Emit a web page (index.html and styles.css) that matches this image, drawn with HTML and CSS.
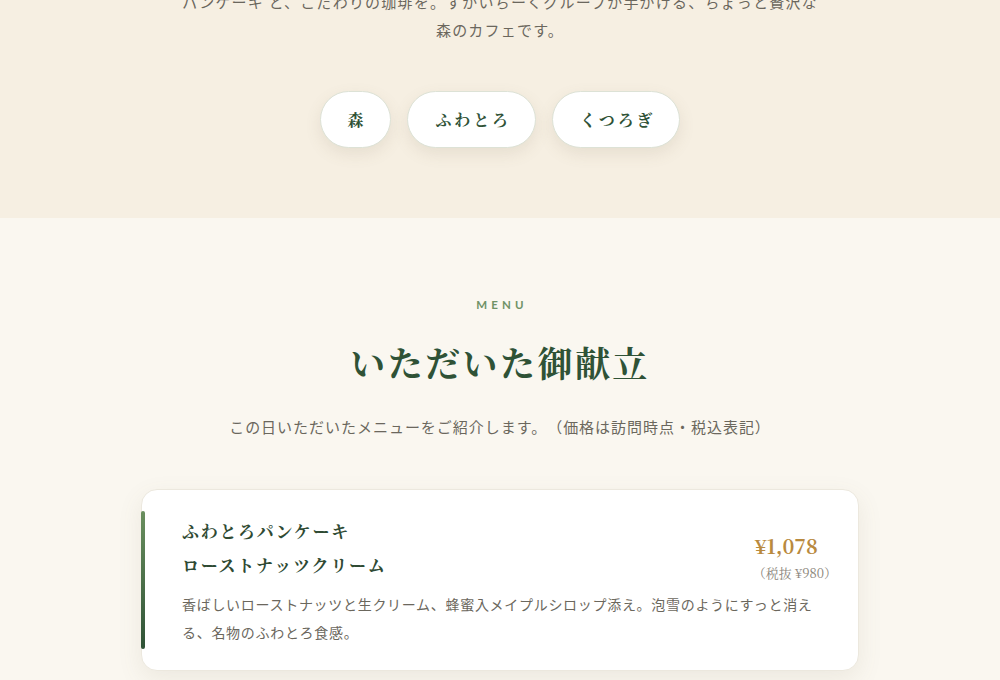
FILE: index.html
```html
<!DOCTYPE html>
<html lang="ja">
<head>
<meta charset="utf-8">
<title>いただいた御献立</title>
<link rel="stylesheet" href="styles.css">
</head>
<body>
<header class="hero">
  <p class="hero-lead">パンケーキ と、こだわりの珈琲を。すがいちーくグループが手がける、ちょっと贅沢な<br>森のカフェです。</p>
  <ul class="tags">
    <li class="tag">森</li>
    <li class="tag">ふわとろ</li>
    <li class="tag">くつろぎ</li>
  </ul>
</header>
<main class="menu">
  <p class="menu-label">MENU</p>
  <h1 class="menu-title">いただいた御献立</h1>
  <p class="menu-sub">この日いただいたメニューをご紹介します。（価格は訪問時点・税込表記）</p>
  <article class="card">
    <div class="card-head">
      <h2 class="card-name">ふわとろパンケーキ<br>ローストナッツクリーム</h2>
      <div class="card-price">
        <div class="price">¥1,078</div>
        <div class="price-sub">（税抜 ¥980）</div>
      </div>
    </div>
    <p class="card-desc">香ばしいローストナッツと生クリーム、蜂蜜入メイプルシロップ添え。泡雪のようにすっと消える、名物のふわとろ食感。</p>
  </article>
</main>
</body>
</html>
```
FILE: styles.css
```css
html, body {
  margin: 0;
  padding: 0;
}
body {
  font-family: "Noto Sans CJK JP", "Noto Sans", sans-serif;
  color: #6b675d;
  background: #faf7f0;
  text-spacing-trim: space-all;
}
.hero {
  background: #f6efe2;
  padding: 0 0 70px;
  text-align: center;
}
.hero-lead {
  margin: -12px 0 0;
  font-size: 15px;
  line-height: 28px;
  letter-spacing: 0.08em;
  color: #6b675d;
}
.tags {
  list-style: none;
  margin: 47px 0 0;
  padding: 0;
  display: flex;
  justify-content: center;
  gap: 16px;
}
.tag {
  background: #ffffff;
  border: 1px solid #dde2d6;
  border-radius: 999px;
  padding: 17px 24px 17px 27px;
  line-height: 21px;
  font-family: "Noto Serif CJK JP", "Liberation Serif", serif;
  font-weight: 700;
  font-size: 16px;
  letter-spacing: 0.18em;
  color: #2f5236;
  box-shadow: 0 6px 16px rgba(120, 110, 80, 0.12);
}
.menu {
  padding: 79px 0 40px;
  text-align: center;
}
.menu-label {
  margin: 0;
  font-family: "Lato", "Noto Sans", sans-serif;
  font-weight: 700;
  font-size: 11.5px;
  line-height: 16px;
  letter-spacing: 0.36em;
  color: #6f9266;
  padding-left: 0.36em;
}
.menu-title {
  margin: 24px 0 0;
  font-family: "Noto Serif CJK JP", "Liberation Serif", serif;
  font-weight: 700;
  font-size: 35px;
  line-height: 50px;
  letter-spacing: 0.07em;
  color: #2f5236;
}
.menu-sub {
  margin: 26px 0 0;
  font-size: 15px;
  line-height: 28px;
  letter-spacing: 0.065em;
  color: #6b675d;
}
.card {
  position: relative;
  box-sizing: border-box;
  width: 718px;
  margin: 48px auto 0;
  background: #ffffff;
  border: 1px solid #ece8de;
  border-radius: 16px;
  padding: 24px 21px 24px 40px;
  text-align: left;
  box-shadow: 0 8px 24px rgba(120, 110, 80, 0.10);
}
.card::before {
  content: "";
  position: absolute;
  left: -1px;
  top: 21px;
  bottom: 21px;
  width: 4px;
  border-radius: 2px;
  background: linear-gradient(180deg, #6a8f5e 0%, #2f5236 100%);
}
.card-head {
  display: flex;
  justify-content: space-between;
  align-items: flex-end;
}
.card-name {
  margin: 0;
  font-family: "Noto Serif CJK JP", "Liberation Serif", serif;
  font-weight: 700;
  font-size: 17px;
  line-height: 34px;
  letter-spacing: 0.1em;
  color: #2f4a33;
}
.card-price {
  text-align: right;
  font-family: "Noto Serif CJK JP", "Liberation Serif", serif;
}
.price {
  font-family: "Noto Serif CJK JP", "Liberation Serif", serif;
  font-weight: 700;
  font-size: 20px;
  line-height: 29px;
  color: #b98a3e;
  padding-right: 19px;
}
.price-sub {
  margin-top: 3px;
  font-size: 13px;
  line-height: 19px;
  color: #8a857a;
}
.card-desc {
  margin: 8px 0 0;
  font-size: 14px;
  line-height: 28px;
  letter-spacing: 0.05em;
  color: #6b675d;
}
```
